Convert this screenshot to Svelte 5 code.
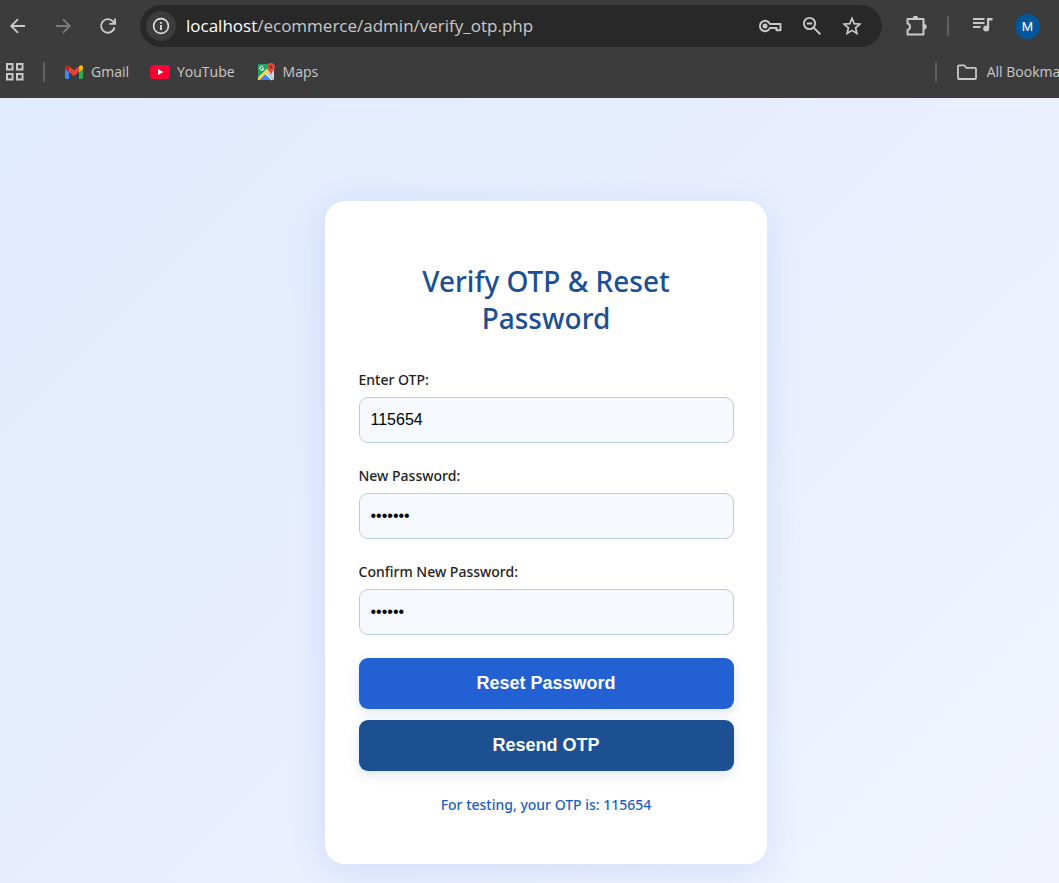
<script>
  let otp = $state('115654');
  let newPassword = $state('abcdefg');
  let confirmPassword = $state('abcdef');
</script>

<div class="viewport">
  <div class="window">
    <header>
      <div class="toolbar">
        <nav class="history" aria-label="History">
          <button aria-label="Back">
            <svg width="20" height="20" viewBox="0 0 20 20"><path d="M17 10H3.4M10 3.2 3.2 10l6.8 6.8" fill="none" stroke="#c9c9c9" stroke-width="1.8" /></svg>
          </button>
          <button aria-label="Forward">
            <svg width="20" height="20" viewBox="0 0 20 20"><path d="M3 10h13.6M10 3.2l6.8 6.8-6.8 6.8" fill="none" stroke="#7c7c7c" stroke-width="1.8" /></svg>
          </button>
          <button aria-label="Reload">
            <svg width="20" height="20" viewBox="0 0 20 20"><path d="M16.6 11.2A6.8 6.8 0 1 1 15.2 5.600L16.400 7.400M17 2.600V7.900H11.300" fill="none" stroke="#c9c9c9" stroke-width="1.900" /></svg>
          </button>
        </nav>
        <div class="omnibox">
          <button class="info" aria-label="Site information">
            <svg width="20" height="20" viewBox="0 0 20 20"><circle cx="10" cy="10" r="7.400" fill="none" stroke="#e3e3e3" stroke-width="1.600" /><path d="M10 9v5M10 6v1.800" stroke="#e3e3e3" stroke-width="1.800" /></svg>
          </button>
          <p class="url"><b>localhost</b>/ecommerce/admin/verify_otp.php</p>
          <div class="actions">
            <button aria-label="Passwords">
              <svg width="24" height="20" viewBox="0 0 24 20"><path d="M11.900 8h10.600v6.300h-4V12h-6.600A5.200 5.200 0 1 1 11.900 8z" fill="none" stroke="#c9c9c9" stroke-width="1.900" stroke-linejoin="round" /><circle cx="7" cy="10" r="2.500" fill="#c9c9c9" /><path d="M18.500 11.500v2.500" stroke="#c9c9c9" stroke-width="1.500" /></svg>
            </button>
            <button aria-label="Zoom">
              <svg width="20" height="20" viewBox="0 0 20 20"><circle cx="7.500" cy="7.500" r="5.600" fill="none" stroke="#c9c9c9" stroke-width="1.900" /><path d="M4.800 7.500h5.400M11.600 11.600l6.800 6.800" stroke="#c9c9c9" stroke-width="2" /></svg>
            </button>
            <button aria-label="Bookmark this page">
              <svg width="20" height="20" viewBox="0 0 20 20"><path d="m10 2.400 2.200 5.200 5.700.5-4.300 3.700 1.300 5.600L10 14.400l-4.900 3 1.300-5.600-4.300-3.700 5.700-.5z" fill="none" stroke="#c9c9c9" stroke-width="1.700" /></svg>
            </button>
          </div>
        </div>
        <div class="tools">
          <button aria-label="Extensions">
            <svg width="24" height="24" viewBox="0 0 24 24"><path d="M3.500 5H19.500V20.500H3.500V16Q6 15.500 6 12.800T3.500 9.600Z" fill="none" stroke="#c9c9c9" stroke-width="2" stroke-linejoin="round" /><path d="M8.800 4.500a2.700 2.700 0 0 1 5.400 0zM20 10a2.700 2.700 0 0 1 0 5.400z" fill="#c9c9c9" /></svg>
          </button>
          <span class="rule"></span>
          <button aria-label="Media controls">
            <svg width="22" height="20" viewBox="0 0 22 20"><path d="M1 3h11.500M1 7h11.500M1 11h7.500" stroke="#c9c9c9" stroke-width="1.800" /><path d="M15 2h5.500v2.500h-3.300V12H15z" fill="#c9c9c9" /><circle cx="14.200" cy="12.500" r="3" fill="#c9c9c9" /></svg>
          </button>
          <button class="avatar" aria-label="Profile">M</button>
        </div>
      </div>

      <nav class="bookmarks" aria-label="Bookmarks">
        <button aria-label="Apps">
          <svg width="20" height="20" viewBox="0 0 20 20"><path d="M2 2h5.500v5.500H2zM12 2h5.500v5.500H12zM2 12h5.500v5.500H2zM12 12h5.500v5.500H12z" fill="none" stroke="#c9c9c9" stroke-width="2" /></svg>
        </button>
        <span class="rule"></span>
        <a href="#gmail">
          <svg width="20" height="20" viewBox="0 0 20 20"><path d="M1 6v9.600Q1 17 2.300 17H5V8z" fill="#4285f4" /><path d="M19 6v9.600q0 1.400-1.300 1.400H15V8z" fill="#34a853" /><path d="M5 4.500 10 8.300l5-3.800V10l-5 3.900L5 10z" fill="#ea4335" /><path d="M1 5.300C1 3 3.200 2.700 4.500 4L5 4.500V10L1 7z" fill="#c5221f" /><path d="M19 5.300c0-2.300-2.200-2.600-3.500-1.300l-.5.500V10l4-3z" fill="#fbbc04" /></svg>
          <span>Gmail</span>
        </a>
        <a href="#youtube">
          <svg width="20" height="20" viewBox="0 0 20 20"><rect y="3" width="20" height="14" rx="3.500" fill="#ff0033" /><path d="m8 7 5.300 3L8 13z" fill="#fff" /></svg>
          <span>YouTube</span>
        </a>
        <a href="#maps">
          <svg width="20" height="20" viewBox="0 0 20 20"><path d="M2 2h14v16H2z" fill="#1ea362" /><path d="m2 18 8-8 8 8z" fill="#4285f4" /><path d="m10 10 6-5 2 2v11z" fill="#d5d8dc" /><path d="m2 15.500 9-9L13 8.500 3.500 18H2z" fill="#ffd64c" /><path d="m9.800 11.500 6.500 6.500" stroke="#fff" stroke-width="1.500" /><path d="M15 1a4 4 0 0 0-4 4c0 3 3.300 4.200 4 8.500C15.700 9.200 19 8 19 5a4 4 0 0 0-4-4z" fill="#dd4b3e" /><circle cx="15" cy="5" r="1.400" fill="#822f2b" /><path d="M7.300 5A2 2 0 1 0 7.700 6.600H6" fill="none" stroke="#fff" stroke-width="1" /></svg>
          <span>Maps</span>
        </a>
        <span class="rule last"></span>
        <button class="all">
          <svg width="22" height="20" viewBox="0 0 22 20"><path d="M2 4.300q0-1 1-1h5.300l2 2.500H19q1 0 1 1V16q0 1-1 1H3q-1 0-1-1z" fill="none" stroke="#c9c9c9" stroke-width="1.800" /></svg>
          <span>All Bookmarks</span>
        </button>
      </nav>
    </header>

    <main>
      <form class="card" onsubmit={(event) => event.preventDefault()}>
        <h1>Verify OTP &amp; Reset Password</h1>
        <div class="field">
          <label for="otp">Enter OTP:</label>
          <input id="otp" type="text" bind:value={otp} />
        </div>
        <div class="field">
          <label for="new-password">New Password:</label>
          <input id="new-password" type="password" bind:value={newPassword} />
        </div>
        <div class="field">
          <label for="confirm-password">Confirm New Password:</label>
          <input id="confirm-password" type="password" bind:value={confirmPassword} />
        </div>
        <div class="buttons">
          <button class="reset" type="submit">Reset Password</button>
          <button class="resend" type="button">Resend OTP</button>
        </div>
        <p class="note">For testing, your OTP is: 115654</p>
      </form>
    </main>
  </div>
</div>

<style>
  :global(body) {
    background: #f0f4ff;
  }

  .viewport {
    overflow: hidden;
    font-family: 'Segoe UI', 'Noto Sans', sans-serif;
  }

  .window {
    display: flex;
    flex-direction: column;
    width: calc(100% + 32px);
    min-height: 100vh;
  }

  button {
    display: flex;
    align-items: center;
    justify-content: center;
    padding: 0;
    border: 0;
    background: none;
    color: inherit;
    font: inherit;
  }

  svg {
    display: block;
    flex: none;
  }

  header {
    padding-top: 5px;
    background: #3c3c3c;
    color: #c9c9c9;
    font-family: 'Segoe UI', 'Open Sans', sans-serif;
  }

  .toolbar {
    display: flex;
    align-items: center;
    height: 42px;
  }

  .history {
    display: flex;
    gap: 25px;
    padding: 0 22px 0 8px;
  }

  .omnibox {
    display: flex;
    flex: 1;
    align-items: center;
    height: 42px;
    padding: 0 20px 0 6px;
    border-radius: 21px;
    background: #282828;
  }

  .info {
    width: 30px;
    height: 30px;
    border-radius: 50%;
    background: #3c3c3c;
  }

  .url {
    flex: 1;
    margin: 0 0 0 10px;
    font-size: 17px;
    line-height: 24px;
    white-space: nowrap;
  }

  .url b {
    color: #fff;
    font-weight: 400;
  }

  .actions {
    display: flex;
    gap: 20px;
  }

  .tools {
    display: flex;
    align-items: center;
    padding: 0 51px 0 22px;
  }

  .rule {
    width: 2px;
    height: 20px;
    border-radius: 1px;
    background: #606060;
  }

  .tools .rule {
    margin: 0 23px 0 19px;
  }

  .avatar {
    width: 25px;
    height: 25px;
    margin-left: 21px;
    border-radius: 50%;
    background: #00579b;
    color: #fff;
    font-family: Roboto, sans-serif;
    font-size: 13px;
  }

  .bookmarks {
    display: flex;
    align-items: center;
    height: 49px;
    padding: 0 11px 2px 5px;
    font-size: 14px;
    line-height: 20px;
  }

  .bookmarks a,
  .all {
    display: flex;
    align-items: center;
    gap: 7px;
    color: inherit;
    text-decoration: none;
    white-space: nowrap;
  }

  .bookmarks .all {
    gap: 9px;
  }

  .bookmarks .rule {
    margin: 0 19px 0 18px;
  }

  .bookmarks a {
    margin-right: 21px;
  }

  .bookmarks .rule.last {
    margin-left: auto;
  }

  main {
    flex: 1;
    padding: 103px 20px 19px;
    background: linear-gradient(135deg, #e0ebfd 0%, #e8eefe 45%, #f2f5ff 100%);
  }

  .card {
    box-sizing: border-box;
    max-width: 442px;
    margin: 0 auto;
    padding: 62px 33px 49px 34px;
    border-radius: 20px;
    background: #fff;
    box-shadow: 0 8px 36px rgba(34, 96, 212, 0.13);
  }

  h1 {
    margin: 0 0 33px;
    color: #1c4f91;
    font-size: 28px;
    font-weight: 500;
    line-height: 37px;
    text-align: center;
  }

  .field {
    display: grid;
    gap: 7px;
    margin-bottom: 23px;
  }

  label {
    color: #222;
    font-size: 14px;
    font-weight: 500;
    line-height: 20px;
  }

  input {
    box-sizing: border-box;
    width: 100%;
    height: 46px;
    padding: 0 11px;
    border: 1px solid #bccae3;
    border-radius: 9px;
    background: #f6fafe;
    color: #000;
    font-family: 'Liberation Sans', Arial, sans-serif;
    font-size: 16px;
  }

  .buttons {
    display: grid;
    gap: 11px;
  }

  .reset,
  .resend {
    height: 51px;
    border-radius: 9px;
    background: #2260d4;
    box-shadow: 0 4px 12px rgba(34, 80, 170, 0.15);
    color: #fff;
    font-family: 'Liberation Sans', Arial, sans-serif;
    font-size: 18px;
    font-weight: 700;
  }

  .resend {
    background: #1d5093;
  }

  .note {
    margin: 24px 0 0;
    color: #1a5fc0;
    font-size: 14px;
    font-weight: 500;
    line-height: 20px;
    text-align: center;
  }
</style>
